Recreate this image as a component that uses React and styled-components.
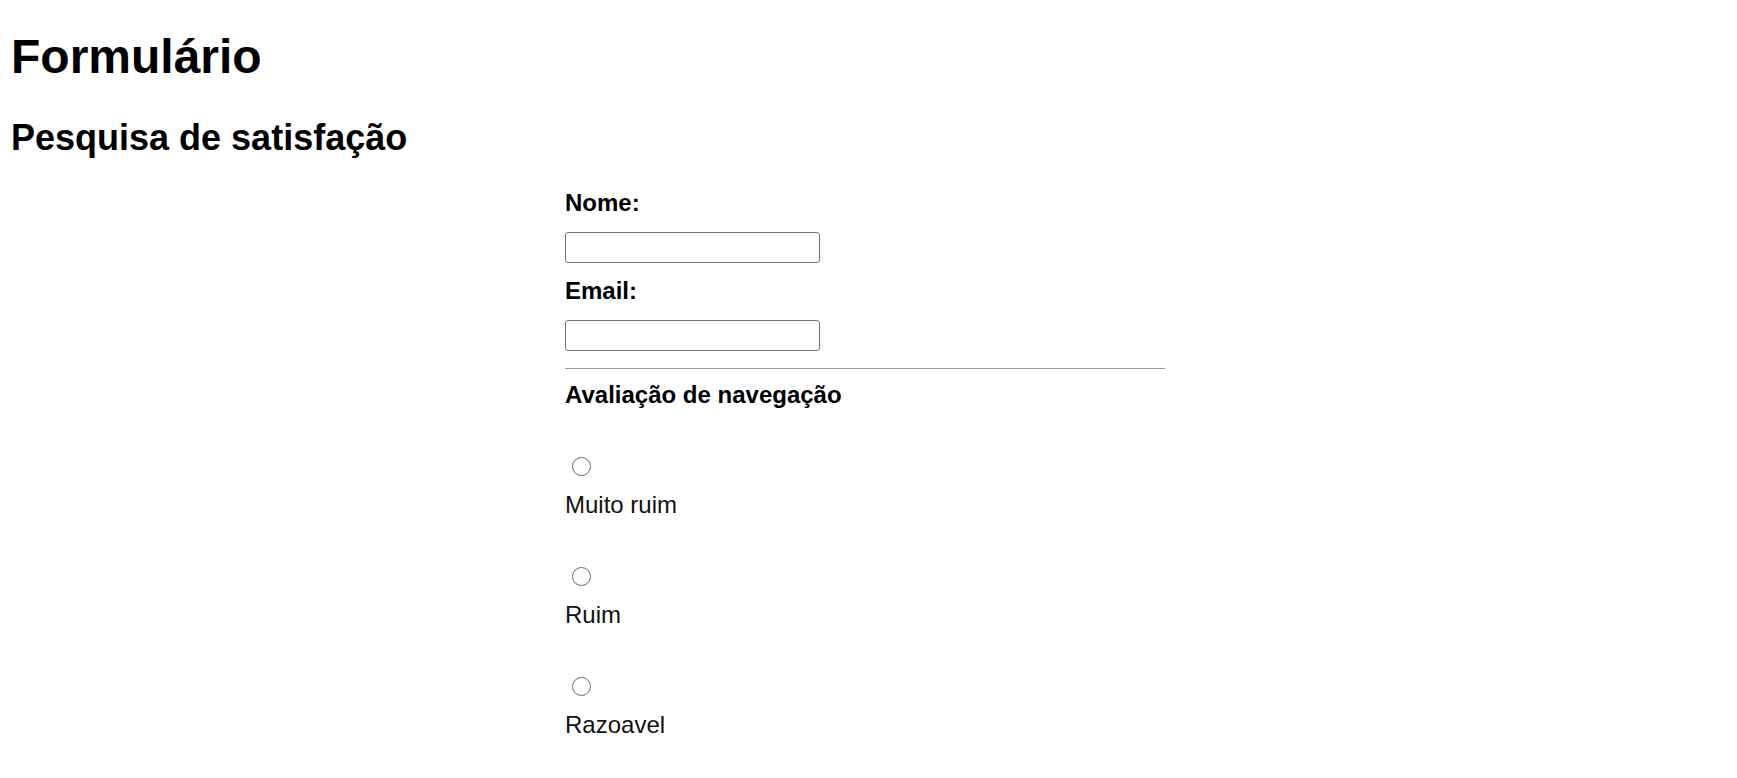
import styled, { createGlobalStyle } from 'styled-components';

const GlobalStyle = createGlobalStyle`
  html, body {
    margin: 0;
    background: #ffffff;
  }
  body {
    font-family: "Liberation Sans", Arial, sans-serif;
    color: #000;
  }
`;

const Page = styled.main`
  padding: 0 18px 0 11px;
`;

const Title = styled.h1`
  margin: 29px 0 0;
  font-size: 48px;
  line-height: 55px;
  font-weight: 700;
`;

const Subtitle = styled.h2`
  margin: 33px 0 0;
  font-size: 36px;
  line-height: 41px;
  font-weight: 700;
`;

const Form = styled.form`
  width: 600px;
  margin: 31px auto 0;
  display: flex;
  flex-direction: column;
  align-items: flex-start;
`;

const FieldLabel = styled.label`
  display: block;
  margin-top: ${(p) => (p.$first ? '0' : '14px')};
  font-size: 24px;
  line-height: 28px;
  font-weight: 700;
`;

const TextInput = styled.input`
  box-sizing: border-box;
  margin: 15px 0 0;
  width: 255px;
  height: 31px;
  border: 1px solid #767676;
  border-radius: 3px;
  padding: 2px 4px;
  font-size: 20px;
  background: #fff;
`;

const Divider = styled.hr`
  align-self: stretch;
  margin: 17px 0 0;
  border: none;
  border-top: 1px solid #9a9a9a;
  height: 0;
`;

const SectionTitle = styled.h3`
  margin: 12px 0 0;
  font-size: 24px;
  line-height: 28px;
  font-weight: 700;
`;

const Option = styled.div`
  display: flex;
  flex-direction: column;
  align-items: flex-start;
  margin-top: 48px;
`;

const Radio = styled.input.attrs({ type: 'radio' })`
  appearance: none;
  box-sizing: border-box;
  width: 19px;
  height: 19px;
  margin: 0 0 0 7px;
  border: 1.6px solid #6b6b6b;
  border-radius: 50%;
  background: #fff;
`;

const OptionText = styled.label`
  margin-top: 15px;
  font-size: 24px;
  line-height: 28px;
  color: #111;
`;

const options = [
  { id: 'muito-ruim', text: 'Muito ruim' },
  { id: 'ruim', text: 'Ruim' },
  { id: 'razoavel', text: 'Razoavel' },
];

export default function App() {
  return (
    <>
      <GlobalStyle />
      <Page>
        <Title>Formulário</Title>
        <Subtitle>Pesquisa de satisfação</Subtitle>

        <Form>
          <FieldLabel $first htmlFor="nome">Nome:</FieldLabel>
          <TextInput id="nome" type="text" />
          <FieldLabel htmlFor="email">Email:</FieldLabel>
          <TextInput id="email" type="email" />

          <Divider />
          <SectionTitle>Avaliação de navegação</SectionTitle>

          {options.map((o) => (
            <Option key={o.id}>
              <Radio id={o.id} name="avaliacao" value={o.id} />
              <OptionText htmlFor={o.id}>{o.text}</OptionText>
            </Option>
          ))}
        </Form>
      </Page>
    </>
  );
}
